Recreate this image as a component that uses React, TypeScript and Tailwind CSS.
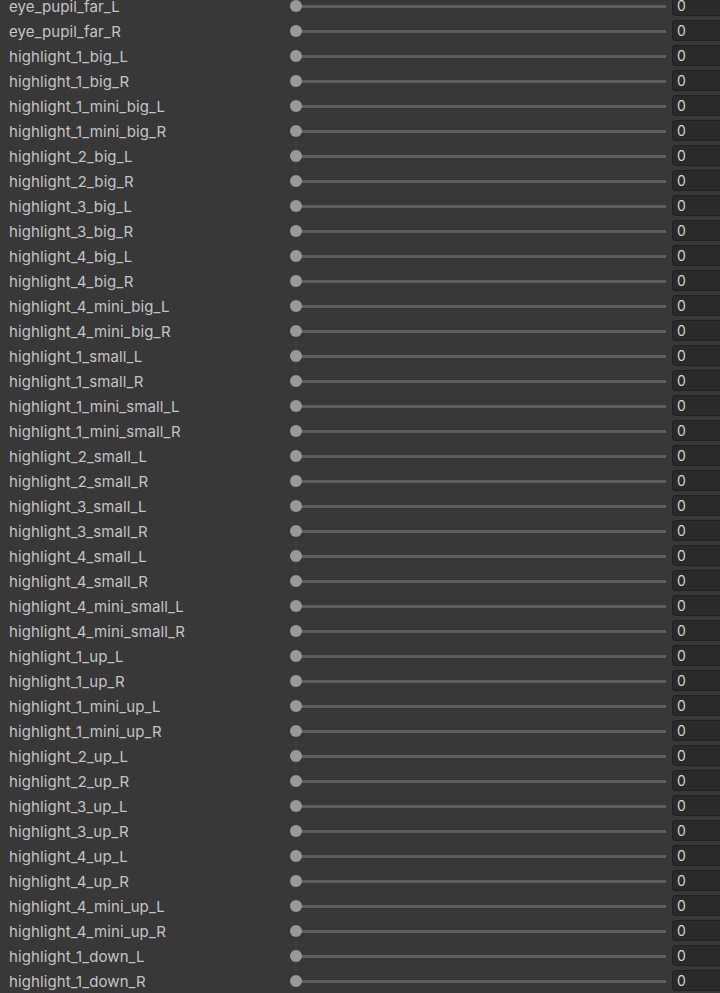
import React from 'react';

const shapes = [
  'eye_pupil_far_L',
  'eye_pupil_far_R',
  'highlight_1_big_L',
  'highlight_1_big_R',
  'highlight_1_mini_big_L',
  'highlight_1_mini_big_R',
  'highlight_2_big_L',
  'highlight_2_big_R',
  'highlight_3_big_L',
  'highlight_3_big_R',
  'highlight_4_big_L',
  'highlight_4_big_R',
  'highlight_4_mini_big_L',
  'highlight_4_mini_big_R',
  'highlight_1_small_L',
  'highlight_1_small_R',
  'highlight_1_mini_small_L',
  'highlight_1_mini_small_R',
  'highlight_2_small_L',
  'highlight_2_small_R',
  'highlight_3_small_L',
  'highlight_3_small_R',
  'highlight_4_small_L',
  'highlight_4_small_R',
  'highlight_4_mini_small_L',
  'highlight_4_mini_small_R',
  'highlight_1_up_L',
  'highlight_1_up_R',
  'highlight_1_mini_up_L',
  'highlight_1_mini_up_R',
  'highlight_2_up_L',
  'highlight_2_up_R',
  'highlight_3_up_L',
  'highlight_3_up_R',
  'highlight_4_up_L',
  'highlight_4_up_R',
  'highlight_4_mini_up_L',
  'highlight_4_mini_up_R',
  'highlight_1_down_L',
  'highlight_1_down_R',
];

const BlendShapeRow: React.FC<{ name: string; value: number }> = ({ name, value }) => {
  return (
    <div className="flex h-[25px] items-center">
      <div className="w-[290px] shrink-0 truncate pl-[9px] pt-[1px] text-[15px] leading-[20px] tracking-[0.1px] text-[#c4c4c4]">{name}</div>
      {/* slider */}
      <div className="relative h-[13px] w-[376px] shrink-0">
        <div className="absolute left-[6px] right-0 top-[5px] h-[3px] bg-[#5e5e5e]" />
        <div className="absolute left-0 top-0 h-[12px] w-[12px] rounded-full bg-[#999999]" />
      </div>
      <div className="ml-[6px] mt-[1px] flex h-[21px] w-[60px] shrink-0 items-center self-start rounded-[3px] border border-[#212121] bg-[#2a2a2a] pl-[4px] text-[14px] text-[#d2d2d2]">
        {value}
      </div>
    </div>
  );
};

export default function App() {
  return (
    <div
      className="h-[993px] w-[720px] overflow-hidden bg-[#383838]"
      style={{ fontFamily: 'Inter, "Noto Sans", sans-serif' }}
    >
      <div className="-mt-[6px]">
        {shapes.map((s) => (
          <BlendShapeRow key={s} name={s} value={0} />
        ))}
      </div>
    </div>
  );
}
